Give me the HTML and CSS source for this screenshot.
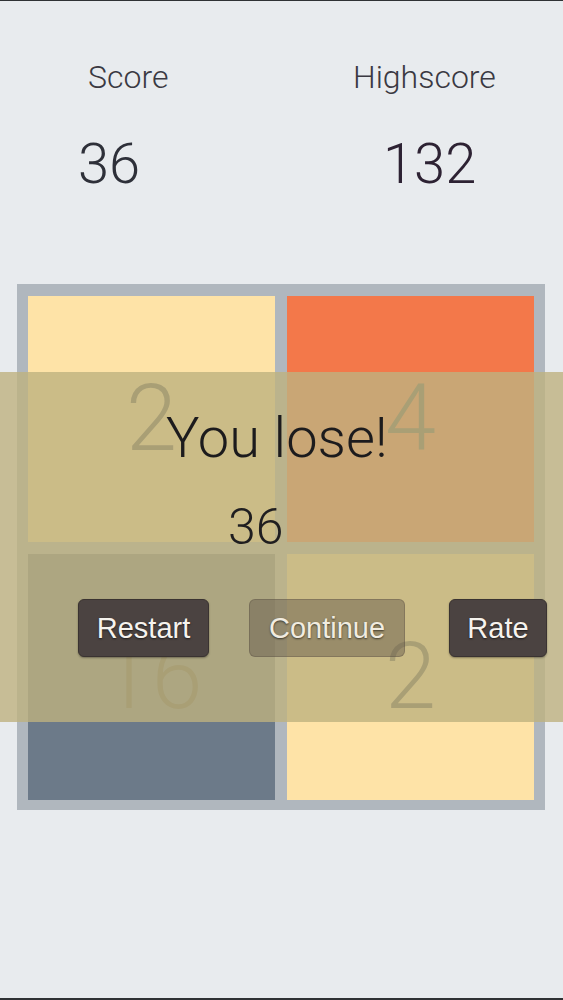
FILE: index.html
```html
<!DOCTYPE html>
<html>
<head>
<meta charset="utf-8">
<link rel="stylesheet" href="styles.css">
</head>
<body>
<div class="page">
  <div class="scores">
    <div class="col col-score">
      <div class="label">Score</div>
      <div class="value value-score">36</div>
    </div>
    <div class="col col-high">
      <div class="label">Highscore</div>
      <div class="value value-high">132</div>
    </div>
  </div>
  <div class="board">
    <div class="tile cream"><span class="num">2</span></div>
    <div class="tile orange"><span class="num">4</span></div>
    <div class="tile slate"><span class="num">16</span></div>
    <div class="tile cream"><span class="num">2</span></div>
  </div>
  <div class="overlay">
    <div class="title">You lose!</div>
    <div class="final">36</div>
    <div class="buttons">
      <div class="btn btn-restart">Restart</div>
      <div class="btn btn-continue">Continue</div>
      <div class="btn btn-rate">Rate</div>
    </div>
  </div>
</div>
</body>
</html>
```
FILE: styles.css
```css
html, body {
  margin: 0;
  padding: 0;
  background: #e8ebee;
}
.page {
  position: relative;
  width: 563px;
  height: 1000px;
  box-sizing: border-box;
  border-top: 1px solid #2f3234;
  border-bottom: 2px solid #2f3234;
  font-family: Roboto, "Liberation Sans", sans-serif;
  font-weight: 300;
  color: #2b2a33;
  overflow: hidden;
}
.scores {
  display: flex;
  padding-top: 60px;
}
.col {
  display: flex;
  flex-direction: column;
}
.col-score {
  margin-left: 88px;
  width: 240px;
}
.col-high {
  margin-left: 25px;
}
.label {
  font-size: 32px;
  line-height: 32px;
  color: #3a3942;
}
.value {
  font-size: 56px;
  line-height: 56px;
  margin-top: 43px;
}
.value-score {
  margin-left: -10px;
  color: #2e3039;
}
.value-high {
  margin-left: 30px;
  color: #2d2233;
}
.board {
  margin: 92px 0 0 17px;
  width: 528px;
  box-sizing: border-box;
  padding: 12px 11px 10px 11px;
  background: #b0b7be;
  display: grid;
  grid-template-columns: 247px 247px;
  grid-template-rows: 246px 246px;
  gap: 12px;
}
.tile {
  display: flex;
  align-items: center;
  justify-content: center;
}
.cream { background: #fee3a7; }
.orange { background: #f3784a; }
.slate { background: #6c7a89; }
.num {
  font-size: 92px;
  line-height: 92px;
  font-weight: 300;
  color: #55554e;
}
.overlay {
  position: absolute;
  left: 0;
  top: 371px;
  width: 563px;
  height: 350px;
  background: rgba(190, 178, 128, 0.8);
  display: flex;
  flex-direction: column;
  align-items: flex-start;
}
.title {
  margin: 39px 0 0 166px;
  font-size: 56px;
  line-height: 55px;
  color: #1c1b1d;
}
.final {
  margin: 36px 0 0 228px;
  font-size: 50px;
  line-height: 50px;
  color: #1f1e20;
}
.buttons {
  display: flex;
  margin-top: 47px;
}
.btn {
  height: 58px;
  box-sizing: border-box;
  border-radius: 6px;
  display: flex;
  align-items: center;
  justify-content: center;
  font-family: "Liberation Sans", Arial, sans-serif;
  font-weight: 400;
  font-size: 29px;
  color: #f6f3ee;
  text-shadow: 0 1px 2px rgba(0, 0, 0, 0.6);
}
.btn-restart {
  margin-left: 78px;
  width: 131px;
  background: #4b4341;
  border: 1px solid #3a3331;
  box-shadow: 0 1px 2px rgba(0, 0, 0, 0.35);
}
.btn-continue {
  margin-left: 40px;
  width: 156px;
  background: rgba(96, 84, 70, 0.45);
  border: 1px solid rgba(80, 70, 60, 0.3);
  color: #f1ece0;
}
.btn-rate {
  margin-left: 44px;
  width: 98px;
  background: #4b4341;
  border: 1px solid #3a3331;
  box-shadow: 0 1px 2px rgba(0, 0, 0, 0.35);
}
```
